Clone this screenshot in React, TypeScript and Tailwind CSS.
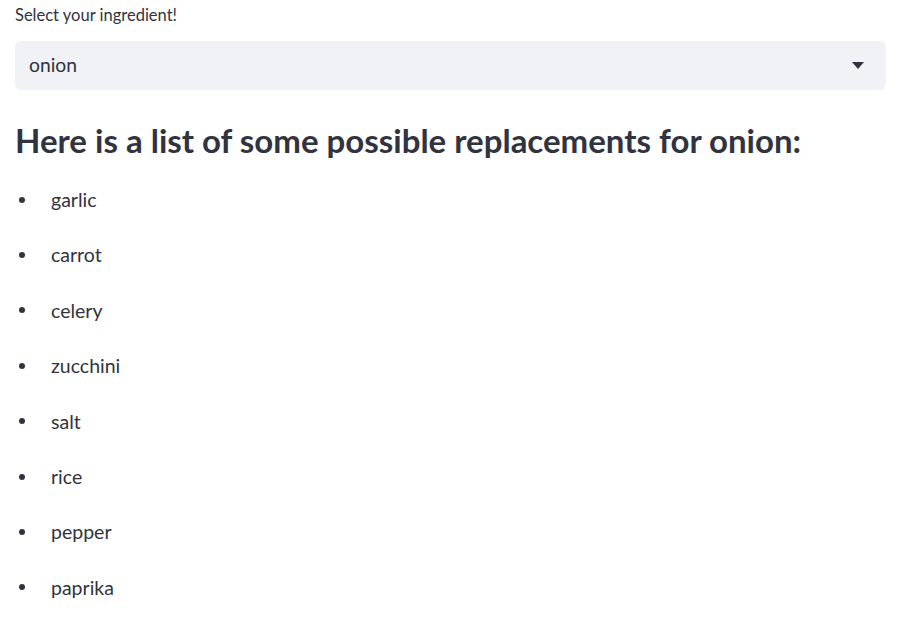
const items = ['garlic', 'carrot', 'celery', 'zucchini', 'salt', 'rice', 'pepper', 'paprika'];

export default function App() {
  return (
    <div className="min-h-screen bg-white pl-[15px] pr-[11px] pt-[5px] text-[#31333f] font-['Lato','Noto_Sans',sans-serif]">
      <label className="block h-5 text-[16.5px] leading-5">Select your ingredient!</label>

      <div className="mt-4 flex h-[49px] items-center justify-between rounded-md bg-[#f0f2f6] pl-[14px] pr-[22px]">
        <span className="text-[19.3px]">onion</span>
        <svg width="12" height="7" viewBox="0 0 12 7" className="text-[#31333f]">
          <path d="M0 0h12L6 7z" fill="currentColor" />
        </svg>
      </div>

      <h3 className="mt-[28px] h-11 text-[33px] font-bold leading-[44px]">
        Here is a list of some possible replacements for onion:
      </h3>

      <ul className="mt-[10px]">
        {items.map((item) => (
          <li key={item} className="flex h-[55.4px] items-center">
            <span className="ml-[4px] h-[6px] w-[6px] rounded-full bg-[#31333f]" />
            <span className="ml-[26px] text-[19.5px]">{item}</span>
          </li>
        ))}
      </ul>
    </div>
  );
}
